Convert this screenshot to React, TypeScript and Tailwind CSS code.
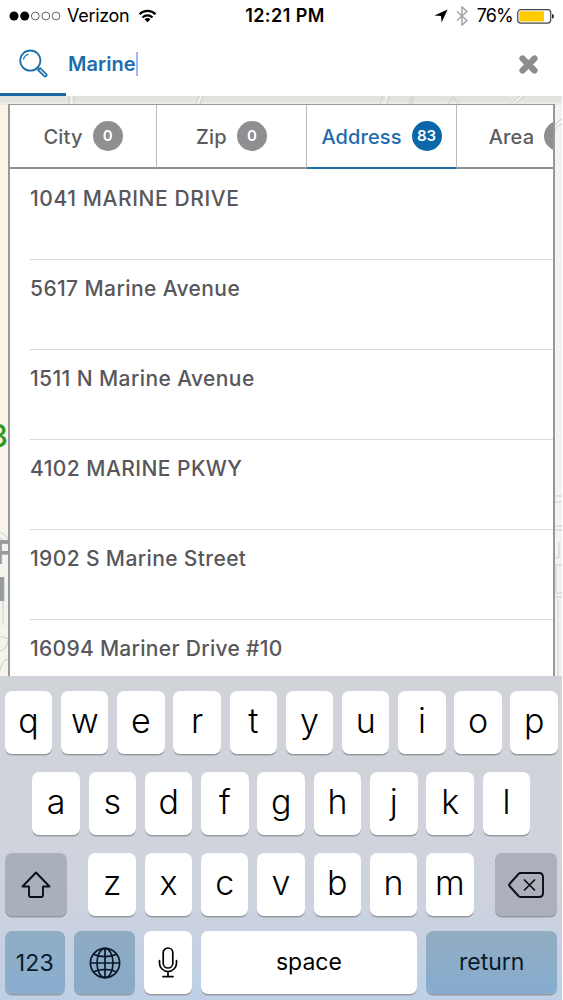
import React from 'react';

interface Tab {
  name: string;
  count: number;
  tracking: string;
  active?: boolean;
}

const TABS: Tab[] = [
  { name: 'City', count: 0, tracking: 'tracking-[0.2px]' },
  { name: 'Zip', count: 0, tracking: 'tracking-[0.2px]' },
  { name: 'Address', count: 83, tracking: 'tracking-[0.1px]', active: true },
  { name: 'Area', count: 0, tracking: 'tracking-[0.2px]' },
];

const RESULTS = [
  { address: '1041 MARINE DRIVE', tracking: 'tracking-[0.6px]' },
  { address: '5617 Marine Avenue', tracking: 'tracking-[0.4px]' },
  { address: '1511 N Marine Avenue', tracking: 'tracking-[0.4px]' },
  { address: '4102 MARINE PKWY', tracking: 'tracking-[0.45px]' },
  { address: '1902 S Marine Street', tracking: 'tracking-[0.38px]' },
  { address: '16094 Mariner Drive #10', tracking: 'tracking-[0.3px]' },
];

const ROW_ONE = 'qwertyuiop'.split('');
const ROW_TWO = 'asdfghjkl'.split('');
const ROW_THREE = 'zxcvbnm'.split('');

const StatusBar = () => (
  <div className="h-8 flex items-center justify-between pl-[9px] pr-2 text-black">
    <div className="flex items-center w-[204px]">
      <svg width="52" height="10" viewBox="0 0 52 10">
        <circle cx="5" cy="5" r="4.5" />
        <circle cx="15.7" cy="5" r="4.5" />
        {[26.3, 36.8, 47].map((cx) => (
          <circle key={cx} cx={cx} cy="5" r="3.9" fill="none" stroke="#555" strokeWidth="0.9" />
        ))}
      </svg>
      <span className="ml-[6px] text-[18px] leading-8 tracking-[-0.3px]">Verizon</span>
      <svg className="ml-[9px]" width="19" height="14" viewBox="0 0 20 15" fill="none" stroke="#000" strokeWidth="2.3">
        <path d="M1.4 5.6a12.2 12.2 0 0 1 17.2 0" />
        <path d="M4.6 9a7.7 7.7 0 0 1 10.8 0" />
        <path d="M10 14.2l-3.2-3.3a4.5 4.5 0 0 1 6.4 0z" fill="#000" stroke="none" />
      </svg>
    </div>
    <span className="text-[18px] leading-8 font-semibold tracking-[0.45px]">12:21 PM</span>
    <div className="flex items-center justify-end w-[197px]">
      <svg width="14" height="14" viewBox="0 0 14 14">
        <path d="M13.6 0.4L7.6 13.6L7 7L0.4 6.4z" />
      </svg>
      <svg className="ml-[8px]" width="12" height="20" viewBox="0 0 12 20" fill="none" stroke="#a3a3a6" strokeWidth="1.5">
        <path d="M1 5.5l10 9-5 4.5V1l5 4.5-10 9" />
      </svg>
      <span className="ml-[9px] text-[18px] leading-8 tracking-[-0.8px]">76%</span>
      <svg className="ml-[4px]" width="37" height="15" viewBox="0 0 37 15">
        <rect x="0.7" y="0.7" width="33" height="13.4" rx="3" fill="#fff" stroke="#444" strokeWidth="1.2" />
        <rect x="2.2" y="2.2" width="24.8" height="10.4" rx="1.2" fill="#fc0" />
        <path d="M35 5c2.8.5 2.8 4.3 0 4.8z" fill="#333" />
      </svg>
    </div>
  </div>
);

const SearchBar = () => (
  <div className="h-16 flex">
    <div className="w-[66px] border-b-[3px] border-[#1b68a4] pt-[17px] pl-[19px]">
      <svg width="29" height="29" viewBox="0 0 29 29" fill="none" stroke="#2273ad" strokeWidth="1.8" strokeLinecap="round">
        <circle cx="11.3" cy="11.6" r="10.1" />
        <path d="M4.5 10.2a7 7 0 0 1 4.6-5" strokeWidth="1.1" />
        <path d="M18.4 18.5l1.4 1.3" />
        <path d="M19.2 21.2l2-2 6 5.9a1.4 1.4 0 0 1-2 2z" />
      </svg>
    </div>
    <div className="flex-1 flex items-center justify-between pr-6">
      <div className="flex items-center pl-[2px]">
        <span className="text-[20px] font-semibold tracking-[0.05px] text-[#1d6dac]">Marine</span>
        <span className="w-[2px] h-6 bg-[#a5b4f4]" />
      </div>
      <svg width="19" height="19" viewBox="0 0 19 19" stroke="#8e8c90" strokeWidth="6.2" strokeLinecap="round">
        <path d="M3.5 3.500l12 12M15.500 3.500l-12 12" />
      </svg>
    </div>
  </div>
);

const MapBackdrop = () => (
  <svg className="absolute inset-0" width="562" height="580" viewBox="0 0 562 580" fill="none">
    <rect width="562" height="580" fill="#f4f3ef" />
    <rect width="9" height="580" fill="#fbf5e8" />
    <rect y="340" width="9" height="90" fill="#faf4ec" />
    <rect y="430" width="9" height="150" fill="#f6f3ef" />
    <rect width="562" height="6" fill="#e3e2e0" />
    <rect y="6" width="562" height="3" fill="#ecebe8" />
    <g stroke="#cfcdca" strokeWidth="1">
      <path d="M69 0v8M74 0v8M196 8l3-8M200 8l3-8M380 8l3-8M387 8l2-8M409 8l3-8M412 8l2-8M448 8l5-7 6 7M511 8l9-8M515 8l9-8" />
      <path d="M554 30q5-6 8-7M554 34q5-6 8-6M554 400h8M554 406h8M554 430h8M554 434h8M554 462h5v-16M556 470v26M554 469h8M554 497h8M558 503v77M554 501h8" />
      <path d="M0 436q5 2 8 7M0 442q5 3 8 6M3 503v26M0 541q5-1 8 2M0 555q6-1 8-10M0 575q2-11 8-12" />
    </g>
    <g stroke="#f6f5f3" strokeWidth="1.5">
      <path d="M71.500 0v8M198 8l3-8M385 8l2-8M513 8l9-8M554 403h8M554 432h8" />
    </g>
  </svg>
);

const SearchResults = () => (
  <div className="relative ml-2 mt-2 w-[547px] h-[572px] border-x-2 border-t border-[#98979a] bg-white overflow-hidden">
    <div className="flex w-[600px] h-[64px]">
      {TABS.map((tab) => (
        <div
          key={tab.name}
          className={`w-[150px] first:w-[147px] shrink-0 flex items-center justify-center gap-[10px] border-b-2 border-r border-r-[#b9b8ba] ${
            tab.active ? 'text-[#1d6ba9] border-b-[#1b70ab]' : 'text-[#5d5c60] border-b-[#8f8e91]'
          }`}
        >
          <span className={`text-[20px] font-medium leading-7 pt-px ${tab.tracking}`}>{tab.name}</span>
          <span
            className={`size-[30px] shrink-0 rounded-full flex items-center justify-center text-[15px] font-semibold text-white ${
              tab.active ? 'bg-[#0b67a9]' : 'bg-[#8f8e90]'
            }`}
          >
            {tab.count}
          </span>
        </div>
      ))}
    </div>
    <ul className="pl-5 pt-px">
      {RESULTS.map(({ address, tracking }) => (
        <li key={address} className="h-[90px] pt-[14px] border-b border-[#d9d8da]">
          <span className={`block text-[21px] font-medium leading-[29px] text-[#58575b] whitespace-nowrap ${tracking}`}>
            {address}
          </span>
        </li>
      ))}
    </ul>
  </div>
);

interface KeyProps {
  className?: string;
  children: React.ReactNode;
}

const Key: React.FC<KeyProps> = ({ className = 'w-[47.5px] bg-white', children }) => (
  <div className={`h-[63px] shrink-0 rounded-[7px] shadow-[0_1.500px_0_#9699a0] flex items-center justify-center ${className}`}>
    {children}
  </div>
);

const Letter = ({ char }: { char: string }) => (
  <Key>
    <span className="text-[34px] font-[350] leading-[56px] pb-[4px]">{char}</span>
  </Key>
);

const Keyboard = () => (
  <div className="relative h-[324px] pt-[15px] px-[4.800px] text-black bg-[linear-gradient(to_bottom,#d0d3d8_0%,#d0d3dc_50%,#cdd2de_70%,#bdd0e6_100%)]">
    <div className="flex gap-[8.700px]">
      {ROW_ONE.map((char) => (
        <Letter key={char} char={char} />
      ))}
    </div>
    <div className="flex gap-[8.800px] mt-[18px] pl-[27.500px]">
      {ROW_TWO.map((char) => (
        <Letter key={char} char={char} />
      ))}
    </div>
    <div className="flex justify-between mt-[18px]">
      <Key className="w-[62.500px] bg-[#aab0ba]">
        <svg width="30" height="28" viewBox="0 0 30 28" fill="none" stroke="#0b0f17" strokeWidth="1.9" strokeLinejoin="round">
          <path d="M15 1.500L28.500 15.500H22V24q0 2-2 2H10q-2 0-2-2V15.500H1.500z" />
        </svg>
      </Key>
      <div className="flex gap-[8.800px]">
        {ROW_THREE.map((char) => (
          <Letter key={char} char={char} />
        ))}
      </div>
      <Key className="w-[62.500px] bg-[#abb0ba]">
        <svg width="36" height="26" viewBox="0 0 36 26" fill="none" stroke="#0b0f17" strokeWidth="1.9" strokeLinecap="round" strokeLinejoin="round">
          <path d="M12.500 1H31q4 0 4 4v16q0 4-4 4H12.500q-1.200 0-2-1L1.500 14q-.8-1 0-2l9-10q.8-1 2-1z" />
          <path d="M16.500 8l10 10M26.500 8l-10 10" strokeWidth="1.700" />
        </svg>
      </Key>
    </div>
    <div className="flex justify-between mt-[15px]">
      <Key className="w-[60px] bg-[linear-gradient(to_bottom,#90adc5,#8aadcf)]">
        <span className="text-[23px] leading-8 pt-px tracking-[0.2px] text-[#0a1a2c]">123</span>
      </Key>
      <Key className="w-[61.500px] bg-[linear-gradient(to_bottom,#8fabc2,#88aac8)]">
        <svg width="32" height="32" viewBox="0 0 32 32" fill="none" stroke="#081828" strokeWidth="1.7">
          <circle cx="16" cy="16" r="14.600" />
          <ellipse cx="16" cy="16" rx="8" ry="14.600" />
          <path d="M16 1.400v29.200M1.400 16h29.200M4.500 7.200q11.500 5 23 0M4.500 24.800q11.500-5 23 0" />
        </svg>
      </Key>
      <Key>
        <svg width="20" height="31" viewBox="0 0 20 31" fill="none" stroke="#000" strokeWidth="1.700" strokeLinecap="round">
          <rect x="5.200" y="1" width="9.600" height="20" rx="4.800" />
          <path d="M1.500 13.500v2.500a8.500 8.500 0 0 0 17 0v-2.500M10 24.500V29.500M5 29.700h10" />
        </svg>
      </Key>
      <Key className="w-[216.500px] bg-white">
        <span className="text-[23px] leading-8 pb-[2px]">space</span>
      </Key>
      <Key className="w-[131px] bg-[linear-gradient(to_bottom,#92adc0,#86acd0)]">
        <span className="text-[23px] leading-8 pb-[2px] text-[#0a1a2c]">return</span>
      </Key>
    </div>
  </div>
);

const App: React.FC = () => {
  return (
    <div className="w-[563px] h-[1000px] overflow-hidden bg-white font-['Inter',sans-serif]">
      <div className="w-[562px]">
        <StatusBar />
        <SearchBar />
        <div className="relative h-[580px] overflow-hidden">
          <MapBackdrop />
          {/* Map labels peeking out on the left edge */}
          <span className="absolute right-[554px] top-[320px] text-[31px] leading-[40px] font-medium text-[#2d9a1c]">3</span>
          <span className="absolute left-[-5px] top-[439px] text-[33px] leading-[34px] font-semibold text-[#9c9b9b]">F</span>
          <span className="absolute left-[-3px] top-[476px] text-[33px] leading-[34px] font-bold text-[#9c9b9b]">I</span>
          <SearchResults />
        </div>
        <Keyboard />
      </div>
    </div>
  );
};

export default App;
